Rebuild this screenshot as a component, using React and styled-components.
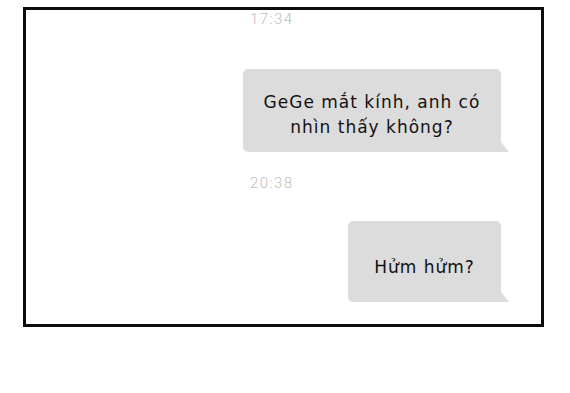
import React from "react";
import styled, { createGlobalStyle } from "styled-components";

const Global = createGlobalStyle`
  html, body { margin: 0; padding: 0; background: #ffffff; }
  body { width: 570px; height: 393px; overflow: hidden; }
`;

const Page = styled.div`
  padding: 7px 0 0 23px;
`;

const Frame = styled.div`
  box-sizing: border-box;
  width: 521px;
  height: 320px;
  border: 3px solid #0c0c0c;
  background: #ffffff;
  display: flex;
  flex-direction: column;
`;

const Stamp = styled.div`
  margin-top: ${(p) => p.$gap}px;
  margin-left: 224px;
  font-family: Roboto, "Liberation Sans", sans-serif;
  font-size: 15px;
  font-weight: 300;
  line-height: 18px;
  letter-spacing: 1.4px;
  color: #bdbdbd;
`;

const Bubble = styled.div`
  position: relative;
  box-sizing: border-box;
  align-self: flex-end;
  margin-right: 40px;
  margin-top: ${(p) => p.$gap}px;
  width: ${(p) => p.$w}px;
  height: ${(p) => p.$h}px;
  padding-top: ${(p) => p.$pt}px;
  background: #dcdcdc;
  border-radius: 5px 5px 0 5px;
  font-family: "DejaVu Sans", Verdana, sans-serif;
  font-size: 17px;
  line-height: 25px;
  letter-spacing: 1px;
  color: #111111;
  text-align: center;

  &::after {
    content: "";
    position: absolute;
    right: -8px;
    bottom: 0;
    width: 0;
    height: 0;
    border-left: 8px solid #dcdcdc;
    border-top: 10px solid transparent;
  }
`;

export default function App() {
  return (
    <>
      <Global />
      <Page>
        <Frame>
          <Stamp $gap={0}>17:34</Stamp>
          <Bubble $gap={41} $w={258} $h={83} $pt={21}>
            GeGe mắt kính, anh có
            <br />
            nhìn thấy không?
          </Bubble>
          <Stamp $gap={22}>20:38</Stamp>
          <Bubble $gap={29} $w={153} $h={81} $pt={34}>
            Hửm hửm?
          </Bubble>
        </Frame>
      </Page>
    </>
  );
}
